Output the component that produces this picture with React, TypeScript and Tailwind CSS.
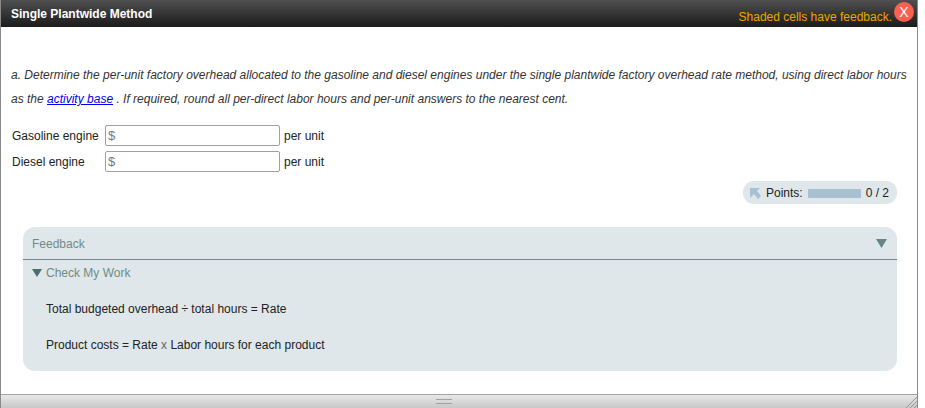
export default function App() {
  return (
    <div className="w-[925px] h-[408px] bg-white overflow-hidden text-[12px] text-[#222] font-['Liberation_Sans',Arial,sans-serif]">
      <div className="w-[918px] h-full flex flex-col border-x border-[#8a8a8a]">
        <header className="h-[27px] shrink-0 flex items-center justify-between bg-gradient-to-b from-[#505050] to-[#1c1c1c] pl-[10px] pr-[3px]">
          <h1 className="font-bold text-[12px] text-white">Single Plantwide Method</h1>
          <div className="flex items-start gap-[2px] h-[27px]">
            <span className="text-[12px] leading-[14px] text-[#f5a300] mt-[10px]">Shaded cells have feedback.</span>
            <span className="w-[20px] h-[20px] mt-[2px] rounded-full bg-[#f9604f] text-white text-[14px] flex items-center justify-center">X</span>
          </div>
        </header>
        <main className="flex-1 flex flex-col min-h-0 pt-[36px]">
          <p className="pl-[10px] pr-[8px] italic leading-[24px] text-[12px] text-[#333]">
            a. Determine the per-unit factory overhead allocated to the gasoline and diesel engines under the single plantwide factory overhead rate method, using direct labor hours as the <a href="#" className="text-[#0000ee] underline">activity base</a> . If required, round all per-direct labor hours and per-unit answers to the nearest cent.
          </p>
          <div className="mt-[14px] pl-[11px] flex flex-col gap-[5px]">
            {["Gasoline engine", "Diesel engine"].map((label) => (
              <div key={label} className="flex items-center h-[21px]">
                <span className="w-[93px]">{label}</span>
                <div className="w-[175px] h-[21px] border border-[#a0a0a0] rounded-[2px] pl-[2px] flex items-center text-[#7a7a7a] text-[13px]">$</div>
                <span className="ml-[4px]">per unit</span>
              </div>
            ))}
          </div>
          <div className="flex justify-end mt-[9px] pr-[20px]">
            <div className="w-[154px] h-[23px] rounded-[11px] bg-[#dfe7ea] flex items-center pl-[7px]">
              <svg width="11" height="11" viewBox="0 0 11 11" className="mt-[2px]"><path d="M0 0H10L7 3L11 8L8 11L4 6L1 9L0 10Z" fill="#a7c0d2" /></svg>
              <span className="ml-[5px]">Points:</span>
              <span className="ml-[5px] w-[53px] h-[9px] mt-[1px] bg-[#a7c0d2] rounded-[1px]" />
              <span className="ml-[5px]">0 / 2</span>
            </div>
          </div>
          <section className="mt-[23px] ml-[22px] w-[874px] h-[144px] rounded-[12px] bg-[#dfe7ea] flex flex-col">
            <div className="h-[33px] shrink-0 border-b border-[#6f8c8c] flex items-center justify-between pl-[9px] pr-[10px] pt-[1px] text-[#708a88]">
              <span>Feedback</span>
              <svg width="11" height="9" viewBox="0 0 11 9"><path d="M0 0H11L5.5 9Z" fill="#688585" /></svg>
            </div>
            <div className="flex items-center h-[26px] pl-[9px] text-[#708a88]">
              <svg width="10" height="8" viewBox="0 0 10 8"><path d="M0 0H10L5 8Z" fill="#4f6d6d" /></svg>
              <span className="ml-[4px]">Check My Work</span>
            </div>
            <p className="pl-[23px] mt-[14px] leading-[18px] text-[#222]">Total budgeted overhead ÷ total hours = Rate</p>
            <p className="pl-[23px] mt-[18px] leading-[18px] text-[#222]">Product costs = Rate <span className="text-[#666]">x</span> Labor hours for each product</p>
          </section>
        </main>
        <footer className="relative h-[14px] shrink-0 border-t border-[#a3a3a3] bg-gradient-to-b from-[#e8e8e8] to-[#c8c8c8]">
          <div className="mt-[4px] ml-[435px] w-[16px] h-[5px] border-y border-[#a0a0a0]" />
          <svg width="12" height="12" viewBox="0 0 12 12" className="absolute right-0 bottom-0">
            <path d="M12 1L1 12M12 5L5 12M12 9L9 12" stroke="#999" fill="none" />
          </svg>
        </footer>
      </div>
    </div>
  );
}
